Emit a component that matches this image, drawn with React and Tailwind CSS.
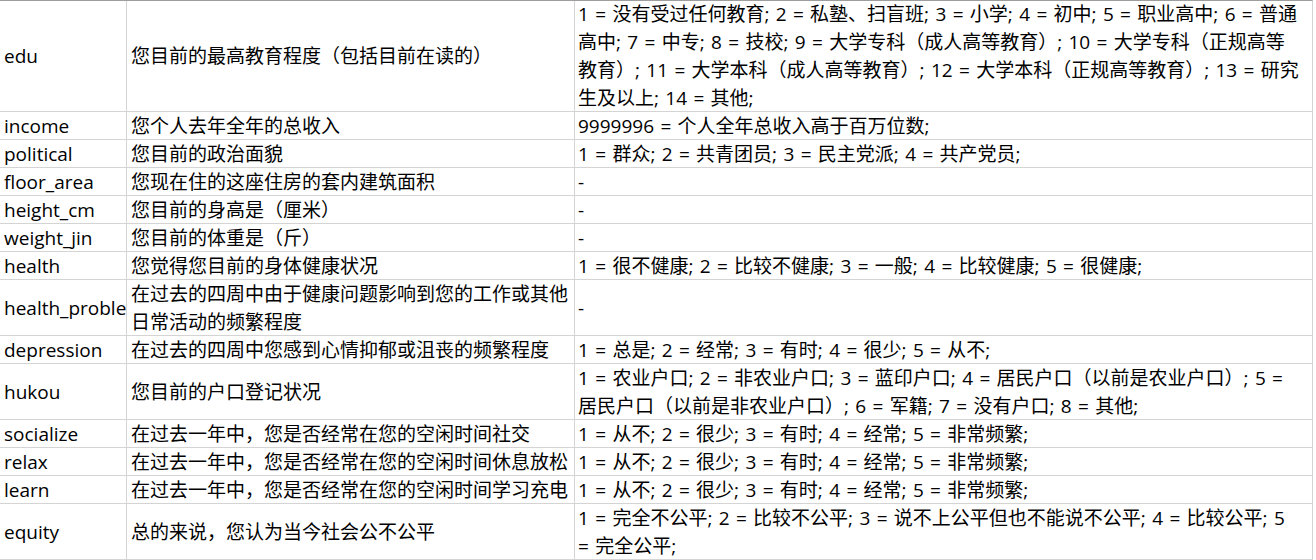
const rows = [
  {
    name: 'edu',
    label: ['您目前的最高教育程度（包括目前在读的）'],
    value: [
      '1 = 没有受过任何教育; 2 = 私塾、扫盲班; 3 = 小学; 4 = 初中; 5 = 职业高中; 6 = 普通',
      '高中; 7 = 中专; 8 = 技校; 9 = 大学专科（成人高等教育）; 10 = 大学专科（正规高等',
      '教育）; 11 = 大学本科（成人高等教育）; 12 = 大学本科（正规高等教育）; 13 = 研究',
      '生及以上; 14 = 其他;',
    ],
    lines: 4,
  },
  { name: 'income', label: ['您个人去年全年的总收入'], value: ['9999996 = 个人全年总收入高于百万位数;'], lines: 1 },
  { name: 'political', label: ['您目前的政治面貌'], value: ['1 = 群众; 2 = 共青团员; 3 = 民主党派; 4 = 共产党员;'], lines: 1 },
  { name: 'floor_area', label: ['您现在住的这座住房的套内建筑面积'], value: ['-'], lines: 1 },
  { name: 'height_cm', label: ['您目前的身高是（厘米）'], value: ['-'], lines: 1 },
  { name: 'weight_jin', label: ['您目前的体重是（斤）'], value: ['-'], lines: 1 },
  {
    name: 'health',
    label: ['您觉得您目前的身体健康状况'],
    value: ['1 = 很不健康; 2 = 比较不健康; 3 = 一般; 4 = 比较健康; 5 = 很健康;'],
    lines: 1,
  },
  {
    name: 'health_problem',
    label: ['在过去的四周中由于健康问题影响到您的工作或其他', '日常活动的频繁程度'],
    value: ['-'],
    lines: 2,
  },
  {
    name: 'depression',
    label: ['在过去的四周中您感到心情抑郁或沮丧的频繁程度'],
    value: ['1 = 总是; 2 = 经常; 3 = 有时; 4 = 很少; 5 = 从不;'],
    lines: 1,
  },
  {
    name: 'hukou',
    label: ['您目前的户口登记状况'],
    value: [
      '1 = 农业户口; 2 = 非农业户口; 3 = 蓝印户口; 4 = 居民户口（以前是农业户口）; 5 =',
      '居民户口（以前是非农业户口）; 6 = 军籍; 7 = 没有户口; 8 = 其他;',
    ],
    lines: 2,
  },
  {
    name: 'socialize',
    label: ['在过去一年中，您是否经常在您的空闲时间社交'],
    value: ['1 = 从不; 2 = 很少; 3 = 有时; 4 = 经常; 5 = 非常频繁;'],
    lines: 1,
  },
  {
    name: 'relax',
    label: ['在过去一年中，您是否经常在您的空闲时间休息放松'],
    value: ['1 = 从不; 2 = 很少; 3 = 有时; 4 = 经常; 5 = 非常频繁;'],
    lines: 1,
  },
  {
    name: 'learn',
    label: ['在过去一年中，您是否经常在您的空闲时间学习充电'],
    value: ['1 = 从不; 2 = 很少; 3 = 有时; 4 = 经常; 5 = 非常频繁;'],
    lines: 1,
  },
  {
    name: 'equity',
    label: ['总的来说，您认为当今社会公不公平'],
    value: [
      '1 = 完全不公平; 2 = 比较不公平; 3 = 说不上公平但也不能说不公平; 4 = 比较公平; 5',
      '= 完全公平;',
    ],
    lines: 2,
  },
];

const heights = {
  1: 'h-[28px]',
  2: 'h-[56px]',
  4: 'h-[112px]',
};

function Cell({ lines, className }) {
  return (
    <div className={`flex items-center overflow-hidden whitespace-pre pl-1 ${className}`}>
      <div className="leading-[28px]">
        {lines.map((line, i) => (
          <div key={i}>{line}</div>
        ))}
      </div>
    </div>
  );
}

export default function App() {
  return (
    <div
      className="w-[1313px] bg-white text-[19px] text-black"
      style={{ fontFamily: '"Open Sans", "Noto Sans CJK SC", sans-serif' }}
    >
      {rows.map((row, i) => (
        <div
          key={row.name}
          className={`flex border-b border-r border-[#d4d4d4] ${heights[row.lines]} ${
            i === 0 ? 'border-t border-t-[#9e9e9e]' : ''
          }`}
        >
          <Cell lines={[row.name]} className="w-[127px] shrink-0 border-r border-[#d4d4d4]" />
          <Cell lines={row.label} className="w-[448px] shrink-0 border-r border-[#d4d4d4]" />
          <Cell lines={row.value} className="flex-1 pl-[3px] [word-spacing:1.4px]" />
        </div>
      ))}
    </div>
  );
}
